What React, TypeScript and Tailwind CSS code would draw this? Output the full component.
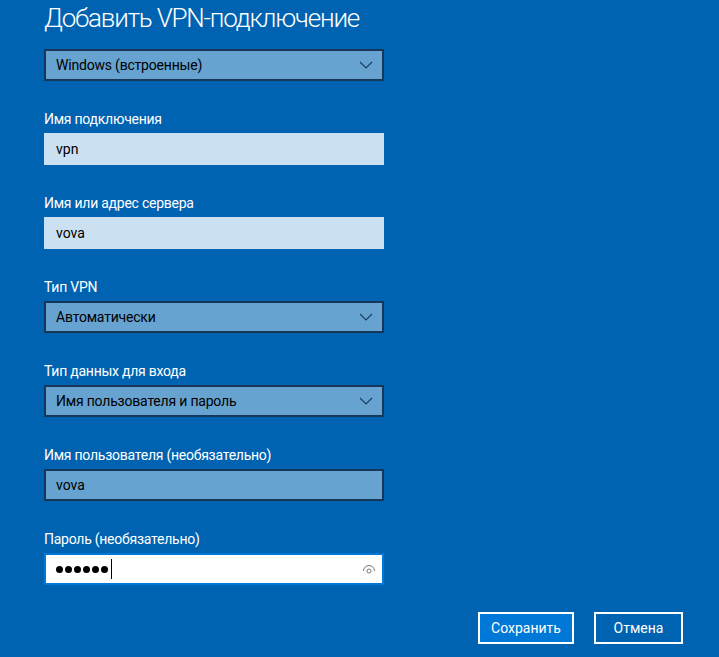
import React from 'react';

const font = { fontFamily: 'Roboto, "Noto Sans", Arial, sans-serif' };

function Chevron() {
  return (
    <svg width="14" height="8" viewBox="0 0 14 8" className="absolute right-[9px] top-1/2 -translate-y-1/2">
      <path d="M1 1 L7 7 L13 1" fill="none" stroke="#1d3f5e" strokeWidth="1.2" />
    </svg>
  );
}

function Select({ value }: { value: string }) {
  return (
    <div className="relative flex h-[32px] w-[340px] items-center border-2 border-[#15385a] bg-[#66a3d1] pl-[10px] text-[14px] tracking-[-0.2px] text-black">
      {value}
      <Chevron />
    </div>
  );
}

function Field({ label, children }: { label: string; children: React.ReactNode }) {
  return (
    <div className="mt-[28px] flex flex-col">
      <div className="mb-[4px] h-[20px] text-[14px] leading-[20px] tracking-[-0.25px] text-white">{label}</div>
      {children}
    </div>
  );
}

function TextBox({ value, variant }: { value: string; variant: 'light' | 'mid' }) {
  const cls =
    variant === 'light'
      ? 'border-[#cbe0f0] bg-[#cbe0f0]'
      : 'border-[#15385a] bg-[#66a3d1]';
  return (
    <div className={`flex h-[32px] w-[340px] items-center border-2 pl-[10px] text-[14px] text-black ${cls}`}>
      {value}
    </div>
  );
}

function PasswordBox() {
  return (
    <div className="relative flex h-[32px] w-[340px] items-center border-2 border-[#0078d7] bg-white pl-[10px]">
      <div className="flex items-center gap-[2px]">
        {[0, 1, 2, 3, 4, 5].map((i) => (
          <span key={i} className="block h-[7px] w-[7px] rounded-full bg-black" />
        ))}
        <span className="ml-[1px] block h-[20px] w-[1px] bg-black" />
      </div>
      {/* значок показа пароля */}
      <svg width="14" height="10" viewBox="0 0 14 10" className="absolute right-[6px] top-[9px]">
        <path d="M1.5 7 A5.5 5.5 0 0 1 12.5 7" fill="none" stroke="#777" strokeWidth="1" />
        <circle cx="7" cy="7" r="2" fill="none" stroke="#777" strokeWidth="1" />
      </svg>
    </div>
  );
}

export default function App() {
  return (
    <div className="h-[657px] w-[719px] overflow-hidden bg-[#0063b1]" style={font}>
      <div className="flex flex-col pl-[44px]">
        <h1 className="h-[36px] text-[26px] font-light leading-[36px] tracking-[-1.2px] text-white">
          Добавить VPN-подключение
        </h1>
        <div className="mt-[13px]">
          <Select value="Windows (встроенные)" />
        </div>

        <Field label="Имя подключения">
          <TextBox value="vpn" variant="light" />
        </Field>
        <Field label="Имя или адрес сервера">
          <TextBox value="vova" variant="light" />
        </Field>
        <Field label="Тип VPN">
          <Select value="Автоматически" />
        </Field>
        <Field label="Тип данных для входа">
          <Select value="Имя пользователя и пароль" />
        </Field>
        <Field label="Имя пользователя (необязательно)">
          <TextBox value="vova" variant="mid" />
        </Field>
        <Field label="Пароль (необязательно)">
          <PasswordBox />
        </Field>
      </div>

      <div className="mt-[27px] flex justify-end gap-[20px] pr-[36px]">
        <button className="h-[32px] w-[96px] border-2 border-white bg-[#0078d7] text-[14px] text-white">
          Сохранить
        </button>
        <button className="h-[32px] w-[89px] border-2 border-white bg-[#0063b1] text-[14px] text-white">
          Отмена
        </button>
      </div>
    </div>
  );
}
